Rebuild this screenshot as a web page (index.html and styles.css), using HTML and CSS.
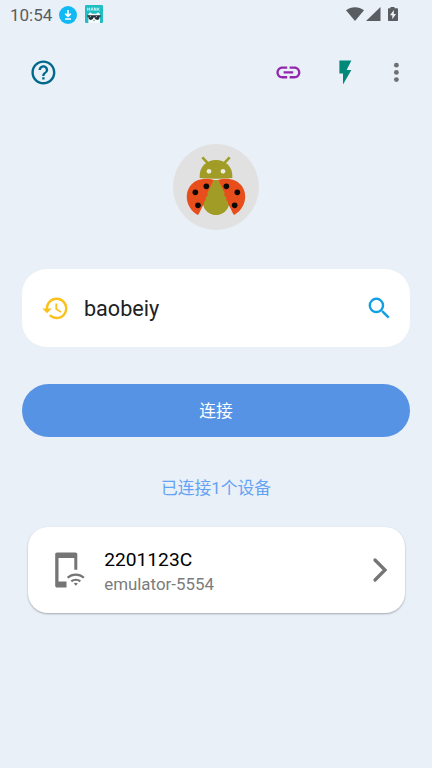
FILE: index.html
```html
<!DOCTYPE html>
<html lang="zh-CN">
<head>
<meta charset="utf-8">
<meta name="viewport" content="width=device-width, initial-scale=1">
<title>baobeiy</title>
<link rel="stylesheet" href="styles.css">
</head>
<body>
<header class="status">
  <span class="time">10:54</span>
  <svg class="download" viewBox="0 0 18 18"><circle cx="9" cy="9" r="9" fill="#12baf5"/><path d="M9 4v6M6.200 7.600 9 10.400l2.800-2.800M6 13h6" fill="none" stroke="#fff" stroke-width="1.600"/></svg>
  <svg class="mask" viewBox="0 0 54 54"><rect width="54" height="54" rx="4" fill="#20bdc3"/><path d="M8 8v9M8 12h6M14 8v9M18 17l3-9 3 9M28 17V8l5 9V8M38 8v9M44 8l-5 5 5 4" fill="none" stroke="#d8f7f5" stroke-width="2.500"/><path d="M10 54V27l6-5 5 4h13l5-4 6 5v27z" fill="#f4fafa"/><path d="M7 31h40v4h-3c0 13-14 12-16 2h-2c-2 10-15 11-16-2H7z" fill="#243039"/><path d="m14 36 4-2M32 36l4-2" stroke="#fff" stroke-width="2"/><path d="M24 46h6l-3 3z" fill="#555"/></svg>
  <svg class="signals" viewBox="0 0 54 18"><path d="M0 4.200C5.300.1 12.700.1 18 4.200L9 15z"/><path d="M34.500 1v14H20z"/><path d="M44.500 2.300V1h4v1.300H51c.6 0 1 .4 1 1V14c0 .6-.4 1-1 1h-8c-.6 0-1-.4-1-1V3.300c0-.6.4-1 1-1z"/><path d="M47.800 4 44 9.200h2.300v4L50 8h-2.200z" fill="#edf2f8"/></svg>
</header>

<nav class="toolbar">
  <svg class="icon help" viewBox="0 0 24 24"><path d="M11 18h2v-2h-2v2zm1-16C6.480 2 2 6.480 2 12s4.480 10 10 10 10-4.480 10-10S17.520 2 12 2zm0 18c-4.410 0-8-3.590-8-8s3.590-8 8-8 8 3.590 8 8-3.590 8-8 8zm0-14c-2.210 0-4 1.790-4 4h2c0-1.100.9-2 2-2s2 .9 2 2c0 2-3 1.750-3 5h2c0-2.250 3-2.500 3-5 0-2.210-1.790-4-4-4z"/></svg>
  <svg class="icon link" viewBox="0 0 24 24"><path d="M3.900 12c0-1.710 1.390-3.100 3.100-3.100h4V7H7c-2.760 0-5 2.240-5 5s2.240 5 5 5h4v-1.900H7c-1.710 0-3.100-1.390-3.100-3.100zM8 13h8v-2H8v2zm9-6h-4v1.900h4c1.710 0 3.100 1.390 3.100 3.100s-1.390 3.100-3.100 3.100h-4V17h4c2.760 0 5-2.240 5-5s-2.240-5-5-5z"/></svg>
  <svg class="icon flash" viewBox="0 0 24 24"><path d="M7 2v11h3v9l7-12h-4l4-8z"/></svg>
  <svg class="icon more" viewBox="0 0 24 24"><circle cx="12" cy="6" r="2"/><circle cx="12" cy="12" r="2"/><circle cx="12" cy="18" r="2"/></svg>
</nav>

<main>
  <svg class="avatar" viewBox="21 18 258 258">
    <circle cx="150" cy="147" r="129" fill="#e1e1e1"/>
    <path d="m109 58 17 18M191 58l-17 18" stroke="#a09c25" stroke-width="8"/>
    <path d="M101 120v-7c0-26 20-47 49-47s49 21 49 47v7q-49 5-98 0z" fill="#a09c25"/>
    <circle cx="129" cy="100" r="7" fill="#ececdf"/><circle cx="171" cy="100" r="7" fill="#ececdf"/>
    <path d="M144 126h12l32 54c8 29-14 51-38 51s-46-22-38-51z" fill="#a09c25"/>
    <path d="M144 126c-25-8-57-3-72 19-21 31-5 72 24 86 6-8 8-17 13-25 4-6 6-11 5-15 6-3 7-7 4-13 7-3 9-7 6-13z" fill="#e84e1b"/>
    <path d="M156 126c25-8 57-3 72 19 21 31 5 72-24 86-6-8-8-17-13-25-4-6-6-11-5-15-6-3-7-7-4-13-7-3-9-7-6-13z" fill="#e84e1b"/>
    <g fill="#0b0805"><circle cx="121" cy="145" r="8.500"/><circle cx="88" cy="163" r="8.500"/><circle cx="96" cy="202" r="8.500"/><circle cx="181" cy="145" r="8.500"/><circle cx="214" cy="163" r="8.500"/><circle cx="206" cy="202" r="8.500"/></g>
  </svg>

  <section class="field">
    <svg class="icon history" viewBox="0 0 24 24"><path d="M13 3c-4.970 0-9 4.030-9 9H1l3.890 3.890.07.14L9 12H6c0-3.870 3.130-7 7-7s7 3.130 7 7-3.130 7-7 7c-1.930 0-3.680-.79-4.940-2.060l-1.420 1.420C8.270 19.990 10.510 21 13 21c4.970 0 9-4.030 9-9s-4.030-9-9-9zm-1 5v5l4.280 2.540.72-1.210-3.500-2.080V8H12z"/></svg>
    <span class="query">baobeiy</span>
    <svg class="icon search" viewBox="0 0 24 24"><path d="M15.500 14h-.79l-.28-.27A6.471 6.471 0 0 0 16 9.500 6.500 6.500 0 1 0 9.500 16c1.610 0 3.090-.59 4.230-1.570l.27.28v.79l5 4.990L20.490 19l-4.990-5zm-6 0C7.010 14 5 11.990 5 9.500S7.010 5 9.500 5 14 7.010 14 9.500 11.990 14 9.500 14z"/></svg>
  </section>

  <button class="connect">连接</button>
  <p class="count">已连接1个设备</p>

  <section class="device">
    <svg class="phone" viewBox="0 0 30 36"><path d="M2 .5h18.500c1 0 1.800.8 1.800 1.800v15.500h-3V6H3.500v23.500h8v6H2c-1 0-1.800-.8-1.800-1.800V2.300C.2 1.300 1 .5 2 .5z" fill="#757575"/><path d="M12.600 25.700c4.600-4.200 11.700-4.200 16.300 0M16.300 29.400c2.500-2.200 6.500-2.200 9 0" fill="none" stroke="#757575" stroke-width="2.200"/><path d="M18.700 31.400q2.100-1.300 4.200 0l-2.100 2.300z" fill="#757575"/></svg>
    <div class="info"><span class="name">2201123C</span><span class="serial">emulator-5554</span></div>
    <svg class="chevron" viewBox="0 0 16 26"><path d="m3 3 10 10L3 23" fill="none" stroke="#757575" stroke-width="3.300" stroke-linecap="round"/></svg>
  </section>
</main>
</body>
</html>
```
FILE: styles.css
```css
* { box-sizing: border-box; }

body {
  margin: 0;
  height: 768px;
  overflow: hidden;
  background: #e9f0f8;
  font-family: Roboto, "Noto Sans CJK SC", sans-serif;
}

svg { display: block; flex: none; }

.status {
  display: flex;
  align-items: center;
  height: 30px;
  padding: 0 32px 0 10px;
  color: #595c60;
}
.time { width: 49px; font-size: 17px; line-height: 30px; white-space: nowrap; }
.download { width: 18px; height: 18px; margin-top: -1px; }
.mask { width: 18px; height: 18px; margin: -2px 0 0 8.300px; }
.signals { width: 54px; height: 18px; margin-left: auto; fill: #595c60; }

.toolbar {
  display: flex;
  align-items: center;
  height: 84px;
  padding: 0 21.600px 0 28.600px;
}
.icon { width: 28.800px; height: 28.800px; }
.help { fill: #00688b; }
.link { margin-left: auto; fill: #9128ac; }
.flash { margin-left: 28.600px; fill: #00897b; }
.more { margin-left: 21.800px; fill: #6d6f73; }

main { display: flex; flex-direction: column; align-items: center; }
.avatar { width: 86px; height: 86px; margin-top: 30px; }

.field {
  display: flex;
  align-items: center;
  width: 388px;
  height: 78px;
  margin-top: 39px;
  padding: 0 16.400px 0 19px;
  border-radius: 25px;
  background: #fff;
}
.history { fill: #fbc01b; }
.query { margin: 2px 0 0 14.200px; color: #202124; font-size: 21.600px; line-height: 30px; }
.search { margin-left: auto; fill: #12a0e5; }

.connect {
  width: 388px;
  height: 52.500px;
  margin: 37.400px 0 0;
  padding: 0;
  border: 0;
  border-radius: 27px;
  background: #5793e5;
  color: #fff;
  font: 400 16.800px/52px Roboto, "Noto Sans CJK SC", sans-serif;
}
.count { margin: 39px 0 0; color: #64a3f3; font-size: 16.800px; font-weight: 400; line-height: 25px; }

.device {
  display: flex;
  align-items: center;
  width: 377px;
  height: 86px;
  margin: 26.500px 0 0;
  padding: 0 16.500px 0 27px;
  border-radius: 20px;
  background: #fff;
  box-shadow: 0 1px 2px #0000004d;
}
.phone { width: 30px; height: 36px; }
.info { display: flex; flex-direction: column; margin: 4px 0 0 19.700px; }
.name { color: #000; font-size: 19.200px; line-height: 24px; }
.serial { color: #7c7c7c; font-size: 16.900px; line-height: 24px; }
.chevron { width: 16px; height: 26px; margin-left: auto; }
```
